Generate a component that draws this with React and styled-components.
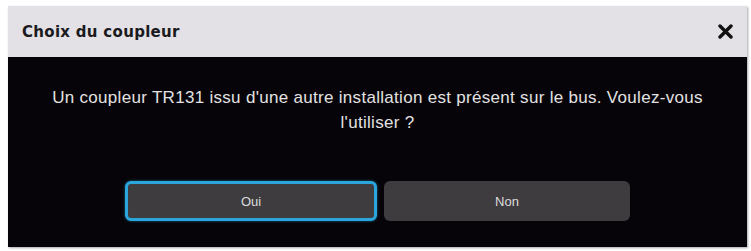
import React from "react";
import styled, { createGlobalStyle } from "styled-components";

const GlobalStyle = createGlobalStyle`
  html, body {
    margin: 0;
    padding: 0;
    background: #ffffff;
  }
  body {
    padding: 6px 4px 3px 8px;
  }
`;

const Dialog = styled.div`
  width: 739px;
  display: flex;
  flex-direction: column;
  box-shadow: 1px 1px 2px rgba(0, 0, 0, 0.35);
`;

const Header = styled.div`
  height: 51px;
  background: #e3e1e5;
  display: flex;
  align-items: center;
  justify-content: space-between;
  padding: 0 14px 0 14px;
  box-sizing: border-box;
`;

const Title = styled.h1`
  margin: 0;
  font-family: "DejaVu Sans", sans-serif;
  font-weight: 700;
  font-size: 15px;
  letter-spacing: 0.3px;
  color: #1a1a1e;
`;

const Close = styled.button`
  border: none;
  background: none;
  padding: 0;
  width: 16px;
  height: 16px;
  display: flex;
  align-items: center;
  justify-content: center;
  cursor: pointer;
`;

const Body = styled.div`
  background: #060408;
  height: 190px;
  display: flex;
  flex-direction: column;
  align-items: center;
  padding-top: 28px;
  box-sizing: border-box;
`;

const Message = styled.p`
  margin: 0;
  width: 670px;
  text-align: center;
  font-family: "Liberation Sans", Arial, sans-serif;
  font-size: 17px;
  letter-spacing: 0.3px;
  line-height: 25px;
  color: #e2e2e2;
`;

const Actions = styled.div`
  display: flex;
  gap: 7px;
  margin-top: 46px;
  align-items: center;
`;

const Button = styled.button`
  width: ${(p) => p.$w}px;
  height: 40px;
  box-sizing: border-box;
  border-radius: 6px;
  background: #3f3c40;
  border: ${(p) => (p.$focused ? "3px solid #2aa6dd" : "none")};
  box-shadow: ${(p) => (p.$focused ? "0 0 3px rgba(42,166,221,0.6)" : "none")};
  color: #dcdcdc;
  font-family: "Liberation Sans", Arial, sans-serif;
  font-size: 13px;
  cursor: pointer;
`;

export default function App() {
  return (
    <>
      <GlobalStyle />
      <Dialog>
        <Header>
          <Title>Choix du coupleur</Title>
          <Close aria-label="Fermer">
            <svg width="15" height="15" viewBox="0 0 15 15">
              <path
                d="M2 2 L13 13 M13 2 L2 13"
                stroke="#111"
                strokeWidth="3.4"
                strokeLinecap="round"
              />
            </svg>
          </Close>
        </Header>
        <Body>
          <Message>
            Un coupleur TR131 issu d'une autre installation est présent sur le
            bus. Voulez-vous l'utiliser ?
          </Message>
          <Actions>
            <Button $w={252} $focused>
              Oui
            </Button>
            <Button $w={246}>Non</Button>
          </Actions>
        </Body>
      </Dialog>
    </>
  );
}
